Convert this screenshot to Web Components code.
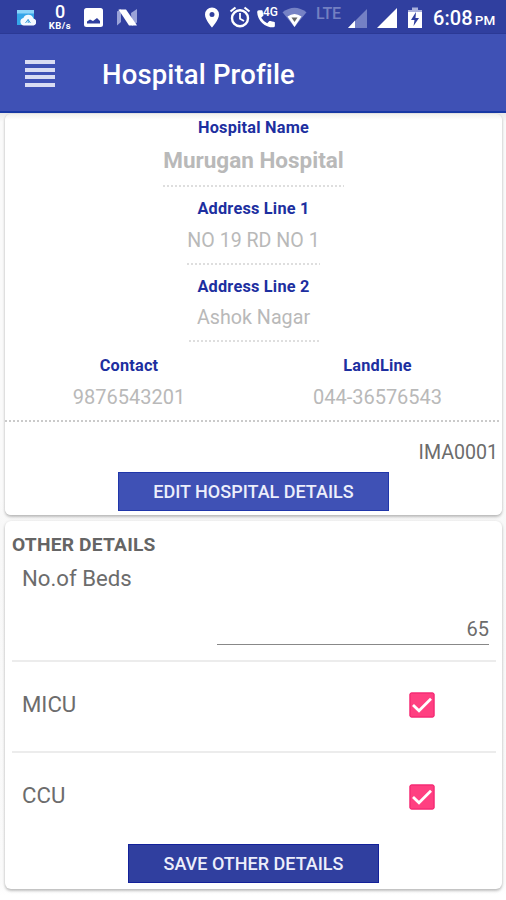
<!DOCTYPE html>
<html lang="en">
<head>
<meta charset="utf-8">
<title>Hospital Profile</title>
<style>
html,body{margin:0;background:#fdfdfd;font-family:Roboto,"Liberation Sans",sans-serif}
body{width:506px;height:900px;overflow:hidden}
</style>
</head>
<body>
<hospital-app></hospital-app>
<script>
const define = (name, html) => customElements.define(name, class extends HTMLElement {
  connectedCallback() {
    if (this.shadowRoot) return;
    const t = document.createElement('template');
    t.innerHTML = html;
    this.attachShadow({mode:'open'}).append(t.content.cloneNode(true));
  }
});

define('status-bar', `<style>
:host{display:flex;height:34px;background:#303f9f;color:#fff;align-items:center;box-sizing:border-box;box-shadow:inset 0 -1px #2b3995}
svg{display:block;flex:none}
.net{width:26px;margin-left:11px;display:flex;flex-direction:column;align-items:center;padding-top:1px}
.net b{font-size:18px;line-height:20px;font-weight:500;height:17px;margin-top:-2px}
.net span{font-size:9.500px;line-height:10px;font-weight:700;letter-spacing:.5px;margin-top:2px}
.call{display:flex;margin-left:5px;width:24px;position:relative;height:20px}
.call span{position:absolute;left:7px;top:-1px;font-size:12px;line-height:12px;font-weight:500}
.lte{font-size:16px;color:#7480c2;margin-left:8px;width:26px;line-height:16px;letter-spacing:-.2px;padding-bottom:7px;font-weight:500}
.time{font-size:20px;font-weight:500;margin-left:10px;white-space:nowrap;padding-top:2px;letter-spacing:.1px}
.time small{font-size:13.500px;margin-left:2px;letter-spacing:0}
</style>
<svg style="margin-left:16px" width="20" height="34" viewBox="0 0 20 34"><path d="M1 10h17v15H1z" fill="#35a6e9"/><path d="M1 10h17v3.500H1z" fill="#8bd4fa"/><path d="M8 25.500a3.800 3.800 0 0 1-.6-7.500 5.300 5.300 0 0 1 10 .5 3.600 3.600 0 0 1 .2 7z" fill="#f4faff"/><path d="M9.500 23l2.600-3.500 2.300 3.500M12.200 19.500V23" stroke="#3b9ddb" fill="none"/></svg>
<div class="net"><b>0</b><span>KB/s</span></div>
<svg style="margin-left:10px" width="21" height="34"><rect x="1" y="8" width="19" height="19" rx="2.500" fill="#fff"/><path d="M4 23.500v-2l3-2 3 1.500 4-3 3 3v2.500z" fill="#303f9f"/></svg>
<svg style="margin-left:12px" width="23" height="34"><path d="M1 11.500L5 9v13l-4 3.500zM15 13l6-4v13.500L16 26z" fill="#9aa3d8"/><path d="M2.500 9.500H10L21 25.500H13z" fill="#fff"/></svg>
<svg style="margin-left:65px" width="16" height="34"><path fill="#fff" fill-rule="evenodd" d="M8 7.500a7 7 0 0 0-7 7C1 20 8 27.500 8 27.500S15 20 15 14.500a7 7 0 0 0-7-7zm0 4.500a2.500 2.500 0 1 1 0 5 2.500 2.500 0 0 1 0-5z"/></svg>
<svg style="margin-left:9px" width="22" height="34" fill="none" stroke="#fff"><circle cx="11" cy="18.300" r="8" stroke-width="2.400"/><path d="M11 13v5.700l4 2.400" stroke-width="1.800"/><path d="M1.500 11.500l5-4M20.500 11.500l-5-4" stroke-width="2.200"/></svg>
<div class="call"><svg style="margin-top:2px" width="22" height="21" viewBox="0 1 19 18"><path d="M1 3.500Q1 2 2.500 2h2.200c.8 0 1 .3 1.100 1 .1 1 .3 2 .6 2.800.2.600 0 .9-.4 1.200L4.500 8.500a13 13 0 0 0 5.200 4.800l1.600-1.700c.4-.4.8-.5 1.300-.3.900.3 1.800.5 2.700.6.800.1 1 .4 1 1.100v2.400q0 1.400-1.400 1.400A14 14 0 0 1 1 3.500z" fill="#fff"/></svg><span>4G</span></div>
<svg style="margin-left:2px" width="26" height="34"><path d="M.5 12.300Q12.500 3 24.500 12.300L12.500 27z" fill="#7682c5"/><path d="M5.500 16.500Q12.500 11.500 19.500 16.500L12.500 27z" fill="#fff"/><path d="M9.500 17.500h6L12.500 22z" fill="#676767"/></svg>
<span class="lte">LTE</span>
<svg style="margin-left:5px" width="21" height="34"><path d="M20 9v19H1z" fill="#7480c4"/><path d="M8 20.500V28H1z" fill="#fff"/></svg>
<svg style="margin-left:8px" width="22" height="34"><path d="M21 8v20H1z" fill="#fff"/></svg>
<svg style="margin-left:9px" width="16" height="34"><path d="M5 7.500h6V10h4v2H1v-2h4z" fill="#aab1dc"/><path d="M1 12h14v16H1z" fill="#fff"/><path d="M9 12l-5 8h3.500L6.500 26 12 18H8.500z" fill="#303f9f"/></svg>
<span class="time">6:08<small>PM</small></span>`);

define('app-bar', `<style>
:host{display:flex;align-items:center;height:79px;box-sizing:border-box;background:#3f51b5;border-bottom:2px solid #1838a5;color:#fff}
.menu{display:grid;gap:3.500px;margin-left:25px;width:30px;margin-top:2px}
.menu i{height:4px;background:#d9dcf3}
h1{margin:4px 0 0 47px;font-size:27.500px;font-weight:500;line-height:32px;white-space:nowrap;letter-spacing:.15px}
</style><div class="menu"><i></i><i></i><i></i><i></i></div><h1><slot></slot></h1>`);

define('detail-card', `<style>
:host{display:flex;flex-direction:column;box-sizing:border-box;margin:0 4px 0 5px;background:#fff;border-radius:6px;box-shadow:0 2px 3px rgba(0,0,0,.24),0 0 3px rgba(0,0,0,.08)}
:host([first]){background:linear-gradient(#f0f0ee,#fff 6px)}
</style><slot></slot>`);

define('text-line', `<style>
:host{display:flex;justify-content:center;align-items:center;white-space:nowrap;color:#b9b9b9;font-size:20px}
:host([kind=label]){color:#1d2fa0;font-size:16.300px;font-weight:700;letter-spacing:.22px}
:host([kind=name]){font-size:22.500px;font-weight:700}
:host([kind=id]){color:#6c6c6c;justify-content:flex-end;font-size:19.600px}
:host([kind=head]){color:#656565;font-size:19.200px;font-weight:700;justify-content:flex-start;letter-spacing:.2px}
:host([kind=row]){color:#6c6c6c;font-size:22.200px;justify-content:flex-start}
</style><slot></slot>`);

define('dotted-rule', `<style>
:host{display:block;height:2px;align-self:center;background:repeating-linear-gradient(90deg,#dedede 0 2px,#fff 2px 4px)}
:host([full]){height:2px;background:repeating-linear-gradient(90deg,#cacaca 0 2px,#fff 2px 4px)}
</style>`);

define('flat-button', `<style>
:host{display:flex;align-self:center;align-items:center;justify-content:center;box-sizing:border-box;background:#3f51b5;border:1px solid #2036aa;color:#eceefb;font-size:18px;font-weight:500;white-space:nowrap}
:host([dark]){background:#303f9f;border-color:#13219a}
</style><slot></slot>`);

define('check-row', `<style>
:host{display:flex;align-items:center;justify-content:space-between;padding:0 67px 0 17px}
::slotted(text-line){padding-bottom:3px}
svg{display:block}
</style><slot></slot><svg width="26" height="26"><rect x=".5" y=".5" width="25" height="25" rx="2" fill="#ff4081"/><rect x="1" y="1" width="24" height="24" rx="1.500" fill="none" stroke="#f0206f"/><path d="M4 13l6 5.800L22 6.800" fill="none" stroke="#fff" stroke-width="2.800"/></svg>`);

define('row-divider', `<style>:host{display:block;height:2px;margin:0 6px 0 7px;background:#ececec}</style>`);

define('number-field', `<style>
:host{display:flex;justify-content:flex-end;align-items:center;align-self:flex-end;width:272px;box-sizing:border-box;height:33px;padding-top:1px;margin-right:13px;border-bottom:1.500px solid #888;color:#6c6c6c;font-size:20px}
</style><slot></slot>`);

define('contact-pair', `<style>:host{display:grid;grid-template-columns:248px 249px}</style><slot></slot>`);

define('hospital-app', `<style>
:host{display:block;width:506px;height:900px;background:linear-gradient(#e9e9e9 113px,#fafafa 122px,#fafafa 500px,#f8f8f8 525px,#fafafa 880px,#fff 895px)}
</style>
<status-bar></status-bar>
<app-bar>Hospital Profile</app-bar>
<detail-card first style="margin-top:1px;height:401px">
<text-line kind="label" style="height:26px">Hospital Name</text-line>
<text-line kind="name" style="height:40px">Murugan Hospital</text-line>
<dotted-rule style="width:181px;margin-top:5px"></dotted-rule>
<text-line kind="label" style="height:43px">Address Line 1</text-line>
<text-line style="height:20px;font-size:19.600px">NO 19 RD NO 1</text-line>
<dotted-rule style="width:133px;margin-top:13px"></dotted-rule>
<text-line kind="label" style="height:42px">Address Line 2</text-line>
<text-line style="height:20px;font-size:19.700px">Ashok Nagar</text-line>
<dotted-rule style="width:130px;margin-top:13px"></dotted-rule>
<contact-pair>
<text-line kind="label" style="height:47px">Contact</text-line><text-line kind="label" style="height:47px">LandLine</text-line>
<text-line style="height:15px">9876543201</text-line><text-line style="height:15px">044-36576543</text-line>
</contact-pair>
<dotted-rule full style="width:495px;align-self:flex-start;margin-top:16px"></dotted-rule>
<text-line kind="id" style="height:20px;margin-top:20px;margin-right:4px">IMA0001</text-line>
<flat-button style="width:271px;height:39px;margin-top:10px">EDIT HOSPITAL DETAILS</flat-button>
</detail-card>
<detail-card style="margin-top:6px;height:368px">
<text-line kind="head" style="height:30px;margin:8px 0 0 7px">OTHER DETAILS</text-line>
<text-line kind="row" style="height:24px;margin:7px 0 0 17px">No.of Beds</text-line>
<number-field style="margin-top:22px">65</number-field>
<row-divider style="margin-top:15px"></row-divider>
<check-row style="height:86px"><text-line kind="row">MICU</text-line></check-row>
<row-divider style="margin-top:3px"></row-divider>
<check-row style="height:87px"><text-line kind="row">CCU</text-line></check-row>
<flat-button dark style="width:251px;height:39px;margin-top:4px">SAVE OTHER DETAILS</flat-button>
</detail-card>`);
</script>
</body>
</html>
